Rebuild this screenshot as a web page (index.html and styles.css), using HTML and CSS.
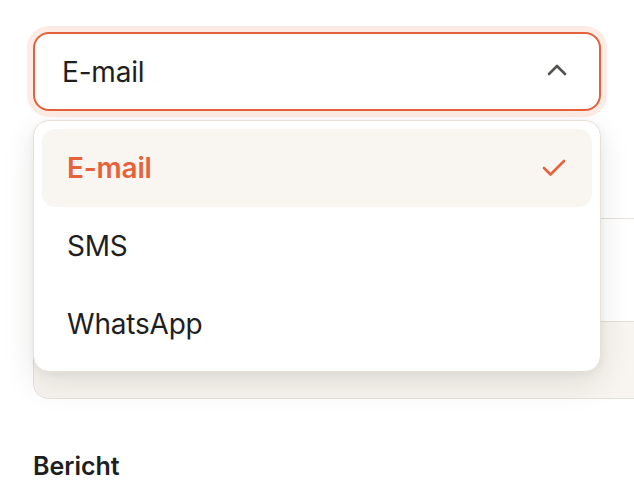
FILE: index.html
```html
<!DOCTYPE html>
<html lang="nl">
<head>
<meta charset="utf-8">
<link rel="stylesheet" href="styles.css">
</head>
<body>
<div class="page">
  <div class="field">
    <div class="select">
      <span class="value">E-mail</span>
      <svg class="chev" width="20" height="12" viewBox="0 0 20 12"><path d="M2 10 L10 2 L18 10" fill="none" stroke="#555350" stroke-width="2.6" stroke-linecap="round" stroke-linejoin="round"/></svg>
    </div>
    <div class="spacer"></div>
    <div class="card">
      <div class="card-top"></div>
      <div class="card-bottom"></div>
    </div>
    <div class="menu">
      <div class="opt active"><span>E-mail</span>
        <svg width="24" height="18" viewBox="0 0 24 18"><path d="M2 9 L8.5 15.5 L22 2" fill="none" stroke="#e6623b" stroke-width="2.6" stroke-linecap="round" stroke-linejoin="round"/></svg>
      </div>
      <div class="opt"><span>SMS</span></div>
      <div class="opt"><span>WhatsApp</span></div>
    </div>
  </div>
  <div class="label">Bericht</div>
</div>
</body>
</html>
```
FILE: styles.css
```css
html, body { margin: 0; padding: 0; background: #fff; overflow: hidden; }
body { width: 634px; height: 494px; font-family: Inter, "Noto Sans", sans-serif; color: #1e1e1e; }
.page { padding: 32px 0 0 33px; }
.field { position: relative; width: 568px; }
.select {
  box-sizing: border-box;
  height: 79px;
  border: 2px solid #e3623b;
  border-radius: 16px;
  box-shadow: 0 0 0 6px #fdebe5;
  background: #fff;
  display: flex; align-items: center; justify-content: space-between;
  padding: 0 32px 0 27px;
  font-size: 28px; letter-spacing: -0.2px;
}
.chev { display: block; margin-top: -4px; }
.spacer { height: 107px; }
.card {
  width: 601px; box-sizing: border-box;
  border: 1.5px solid #e6e0d8; border-right: none;
  border-radius: 16px 0 0 16px;
  overflow: hidden;
}
.card-top { height: 102px; background: #fff; border-bottom: 1.5px solid #e6e0d8; }
.card-bottom { height: 76px; background: #f8f5f0; }
.menu {
  position: absolute; left: 0; top: 88px; width: 568px; box-sizing: border-box;
  background: #fff; border: 1.5px solid #e6e0d8; border-radius: 16px;
  padding: 8px;
  box-shadow: 0 12px 32px rgba(40,30,20,0.11), 0 2px 8px rgba(40,30,20,0.05);
}
.opt {
  height: 78px; display: flex; align-items: center; justify-content: space-between;
  padding: 0 26px 0 25px; border-radius: 13px;
  font-size: 28px; letter-spacing: -0.2px;
}
.opt.active { background: #f9f6f2; color: #e6623b; font-weight: 600; }
.opt svg { display: block; }
.label { margin-top: 52px; font-size: 25px; font-weight: 600; color: #1e1e1e; }
```
